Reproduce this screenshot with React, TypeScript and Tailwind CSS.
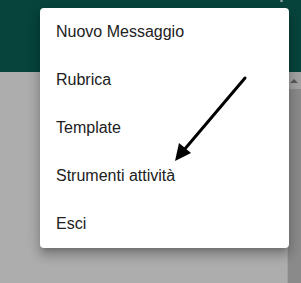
import React from "react";

const items = ["Nuovo Messaggio", "Rubrica", "Template", "Strumenti attività", "Esci"];

export default function App() {
  return (
    <div
      className="relative w-[301px] h-[283px] overflow-hidden flex flex-col bg-[#adadad]"
      style={{ fontFamily: '"Liberation Sans", Arial, sans-serif' }}
    >
      <div className="h-[72px] bg-[#07443c] relative shrink-0">
        <div className="absolute left-[280px] top-0 w-[3px] h-[2px] rounded-full bg-[#8aa39f]" />
      </div>
      <div className="flex-1 flex">
        <div className="flex-1" />
        <div className="w-[14px] flex flex-col">
          <div className="h-[17px] bg-[#a3a3a3] flex items-center justify-center">
            <div className="w-0 h-0 border-l-[4px] border-r-[4px] border-b-[4px] border-l-transparent border-r-transparent border-b-[#5a5a5a]" />
          </div>
          <div className="flex-1 bg-[#8a8a8a] border-l border-[#a0a0a0]" />
        </div>
      </div>

      <div className="absolute left-[40px] top-[8px] w-[249px] h-[240px] bg-white rounded-[4px] shadow-[0_5px_5px_-3px_rgba(0,0,0,0.2),0_8px_10px_1px_rgba(0,0,0,0.14),0_3px_14px_2px_rgba(0,0,0,0.12)] flex flex-col">
        {items.map((t) => (
          <div key={t} className="h-[48px] flex items-center pl-[16px] text-[16px] text-[#212121]">
            {t}
          </div>
        ))}
      </div>

      <svg className="absolute left-0 top-0" width="301" height="283" viewBox="0 0 301 283">
        <line x1="245" y1="78" x2="184" y2="150" stroke="#000" strokeWidth="3" strokeLinecap="round" />
        <polygon points="175,161 179,143 191,153" fill="#000" />
      </svg>
    </div>
  );
}
